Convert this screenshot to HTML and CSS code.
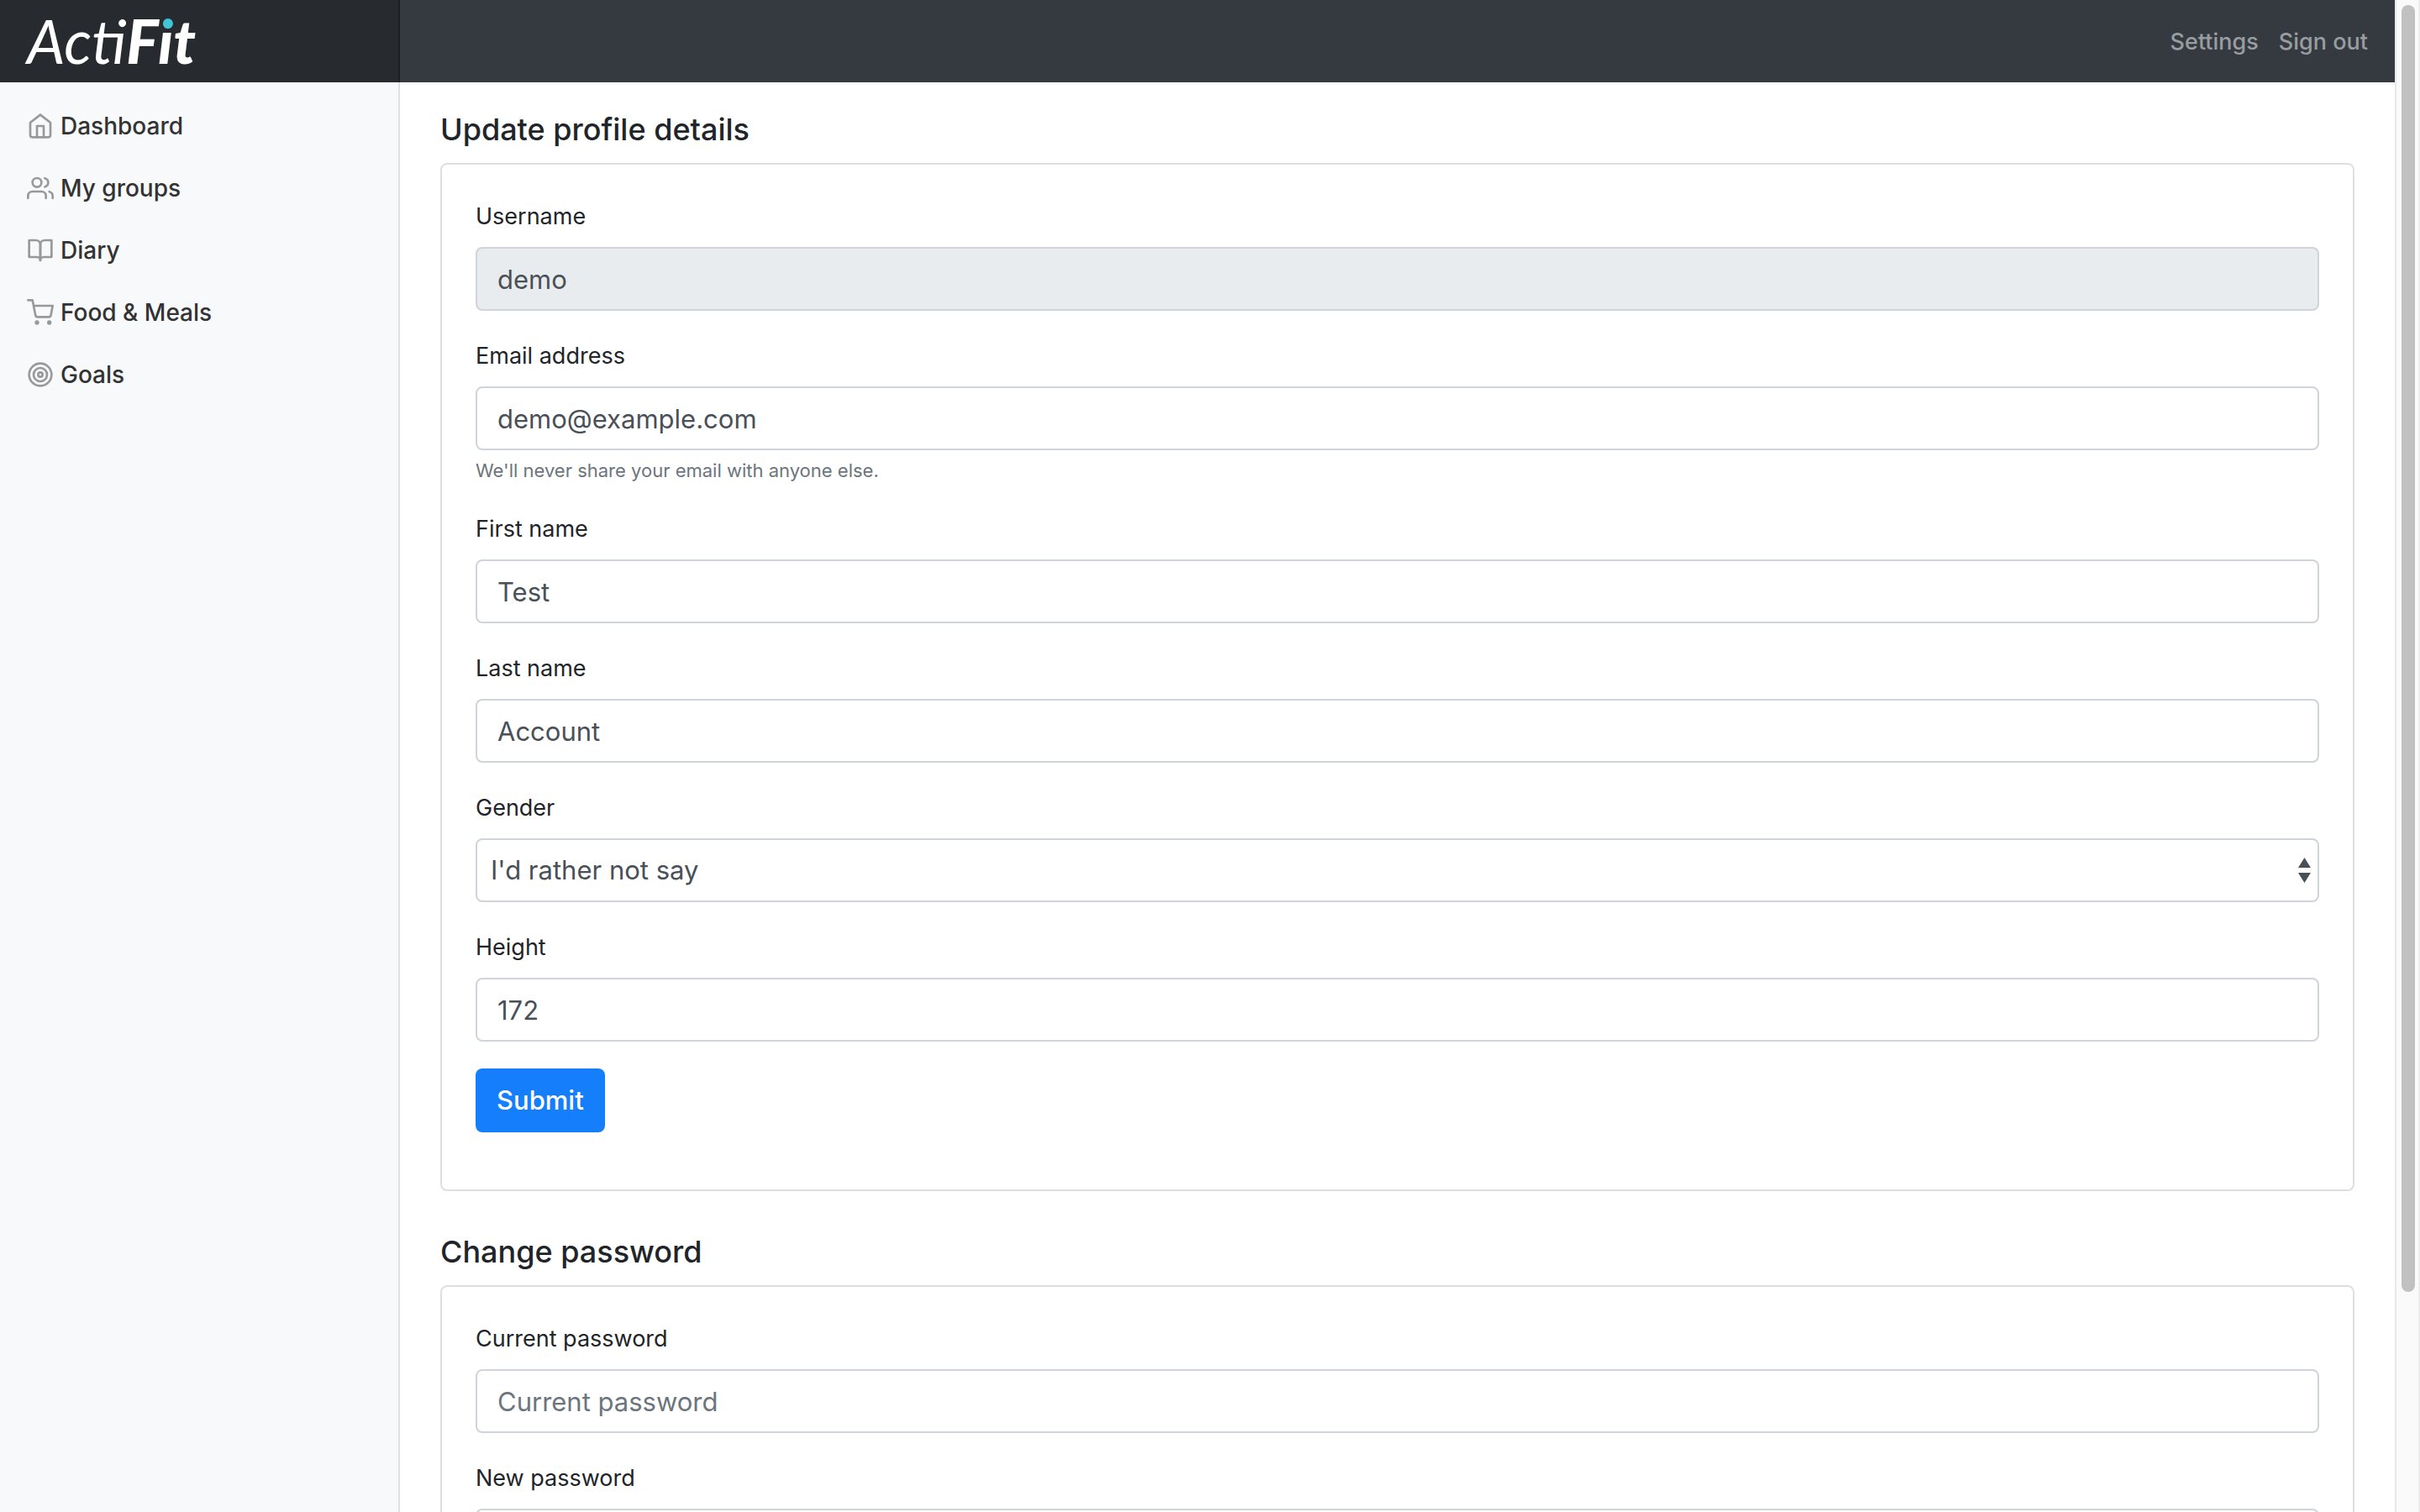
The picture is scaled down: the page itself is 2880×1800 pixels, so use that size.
FILE: index.html
```html
<!DOCTYPE html>
<html lang="en">
<head>
<meta charset="utf-8">
<meta name="viewport" content="width=device-width, initial-scale=1">
<title>ActiFit - Settings</title>
<link rel="stylesheet" href="styles.css">
</head>
<body>
<div class="app">
  <header class="topbar">
    <a class="brand" href="#">Acti<strong>F<span class="brand-i">i</span>t</strong></a>
    <nav class="account" aria-label="Account">
      <a href="#">Settings</a>
      <a href="#">Sign out</a>
    </nav>
  </header>
  <div class="columns">
    <nav class="sidebar" aria-label="Main">
      <a class="nav-link" href="#">
        <svg class="icon" viewBox="0 0 24 24"><path d="M3 9l9-7 9 7v11a2 2 0 0 1-2 2H5a2 2 0 0 1-2-2z"/><polyline points="9 22 9 12 15 12 15 22"/></svg>
        Dashboard
      </a>
      <a class="nav-link" href="#">
        <svg class="icon" viewBox="0 0 24 24"><path d="M17 21v-2a4 4 0 0 0-4-4H5a4 4 0 0 0-4 4v2"/><circle cx="9" cy="7" r="4"/><path d="M23 21v-2a4 4 0 0 0-3-3.87"/><path d="M16 3.13a4 4 0 0 1 0 7.75"/></svg>
        My groups
      </a>
      <a class="nav-link" href="#">
        <svg class="icon" viewBox="0 0 24 24"><path d="M2 3h6a4 4 0 0 1 4 4v14a3 3 0 0 0-3-3H2z"/><path d="M22 3h-6a4 4 0 0 0-4 4v14a3 3 0 0 1 3-3h7z"/></svg>
        Diary
      </a>
      <a class="nav-link" href="#">
        <svg class="icon" viewBox="0 0 24 24"><circle cx="9" cy="21" r="1"/><circle cx="20" cy="21" r="1"/><path d="M1 1h4l2.68 13.39a2 2 0 0 0 2 1.61h9.72a2 2 0 0 0 2-1.61L23 6H6"/></svg>
        Food &amp; Meals
      </a>
      <a class="nav-link" href="#">
        <svg class="icon" viewBox="0 0 24 24"><circle cx="12" cy="12" r="10"/><circle cx="12" cy="12" r="6"/><circle cx="12" cy="12" r="2"/></svg>
        Goals
      </a>
    </nav>
    <main class="content">
      <h1 class="section-title">Update profile details</h1>
      <form class="card">
        <div class="field">
          <label for="username">Username</label>
          <input class="control" id="username" type="text" value="demo" disabled>
        </div>
        <div class="field">
          <label for="email">Email address</label>
          <input class="control" id="email" type="email" value="demo@example.com" aria-describedby="email-help">
          <small class="help" id="email-help">We'll never share your email with anyone else.</small>
        </div>
        <div class="field">
          <label for="first-name">First name</label>
          <input class="control" id="first-name" type="text" value="Test">
        </div>
        <div class="field">
          <label for="last-name">Last name</label>
          <input class="control" id="last-name" type="text" value="Account">
        </div>
        <div class="field">
          <label for="gender">Gender</label>
          <select class="control select" id="gender">
            <option>I'd rather not say</option>
          </select>
        </div>
        <div class="field">
          <label for="height">Height</label>
          <input class="control" id="height" type="text" value="172">
        </div>
        <button class="button" type="submit">Submit</button>
      </form>
      <h2 class="section-title">Change password</h2>
      <form class="card">
        <div class="field">
          <label for="current-password">Current password</label>
          <input class="control" id="current-password" type="password" placeholder="Current password">
        </div>
        <div class="field">
          <label for="new-password">New password</label>
          <input class="control" id="new-password" type="password">
        </div>
      </form>
    </main>
  </div>
</div>
<div class="scrollbar" aria-hidden="true"><div class="scrollbar-thumb"></div></div>
</body>
</html>
```

FILE: styles.css
```css
* {
  box-sizing: border-box;
}

body {
  margin: 0;
  height: 100vh;
  display: flex;
  overflow: hidden;
  background: #fff;
  color: #212529;
  font-family: Inter, "Liberation Sans", sans-serif;
  font-size: 27px;
  line-height: 42px;
}

a {
  color: inherit;
  text-decoration: none;
}

.app {
  flex: 1;
  min-width: 0;
  display: flex;
  flex-direction: column;
}

.topbar {
  flex: none;
  display: flex;
  justify-content: space-between;
  align-items: center;
  background: #343a40;
}

.brand {
  width: 476px;
  height: 98px;
  padding: 8px 32px;
  background: #272b30;
  border-right: 2px solid #1d2024;
  color: #fff;
  font-family: Lato, sans-serif;
  font-size: 72px;
  font-style: italic;
  line-height: 80px;
}

.brand strong {
  font-weight: 900;
}

.brand-i {
  background: linear-gradient(#3fc4d8 36%, #fff 36%);
  -webkit-background-clip: text;
  background-clip: text;
  color: transparent;
}

.account {
  display: flex;
  gap: 24px;
  padding: 2px 32px 0 0;
  color: #9a9da0;
  font-weight: 500;
}

.columns {
  flex: 1;
  min-height: 0;
  display: flex;
}

.sidebar {
  flex: none;
  width: 476px;
  padding-top: 15px;
  background: #f8f9fb;
  border-right: 2px solid #dfe0e2;
}

.nav-link {
  display: flex;
  align-items: center;
  gap: 8px;
  padding: 16px 32px;
  color: #333;
  font-size: 28px;
  font-weight: 500;
}

.icon {
  width: 32px;
  height: 32px;
  fill: none;
  stroke: #999;
  stroke-width: 2;
  stroke-linecap: round;
  stroke-linejoin: round;
}

.content {
  flex: 1;
  min-width: 0;
  padding: 32px 48px;
  overflow: hidden;
}

.section-title {
  margin: 0 0 16px;
  font-size: 36px;
  font-weight: 500;
  line-height: 48px;
}

.card {
  margin-bottom: 48px;
  padding: 40px 40px 68px;
  border: 2px solid #dfdfdf;
  border-radius: 8px;
}

.field {
  display: flex;
  flex-direction: column;
  margin-bottom: 32px;
}

.field label {
  margin-bottom: 14px;
  line-height: 44px;
}

.control {
  width: 100%;
  height: 76px;
  margin: 0;
  padding: 0 24px;
  border: 2px solid #ced4da;
  border-radius: 8px;
  background: #fff;
  color: #495057;
  font: inherit;
  font-size: 31px;
}

.control:disabled {
  background: #e9ecef;
}

.control::placeholder {
  color: #6c757d;
  opacity: 1;
}

.select {
  appearance: none;
  padding: 0 16px;
  background: #fff url("data:image/svg+xml,%3Csvg xmlns='http://www.w3.org/2000/svg' viewBox='0 0 15 30'%3E%3Cpath fill='%23495057' d='M7.5 0L0 12h15zM7.5 30L0 18h15z'/%3E%3C/svg%3E") no-repeat right 8px center / 15px 30px;
}

.help {
  margin-top: 8px;
  color: #6c757d;
  font-size: 22px;
  line-height: 32px;
}

.button {
  display: block;
  height: 76px;
  padding: 0 25px;
  border: 0;
  border-radius: 8px;
  background: #157efb;
  color: #fff;
  font: inherit;
  font-size: 31px;
  font-weight: 500;
}

.scrollbar {
  flex: none;
  width: 30px;
  padding: 6px 4px 0 6px;
  background: #fafafa;
  border-left: 2px solid #e8e8e8;
  border-right: 2px solid #ededed;
}

.scrollbar-thumb {
  width: 16px;
  height: 85.4%;
  border-radius: 8px;
  background: #c1c1c1;
}
```
